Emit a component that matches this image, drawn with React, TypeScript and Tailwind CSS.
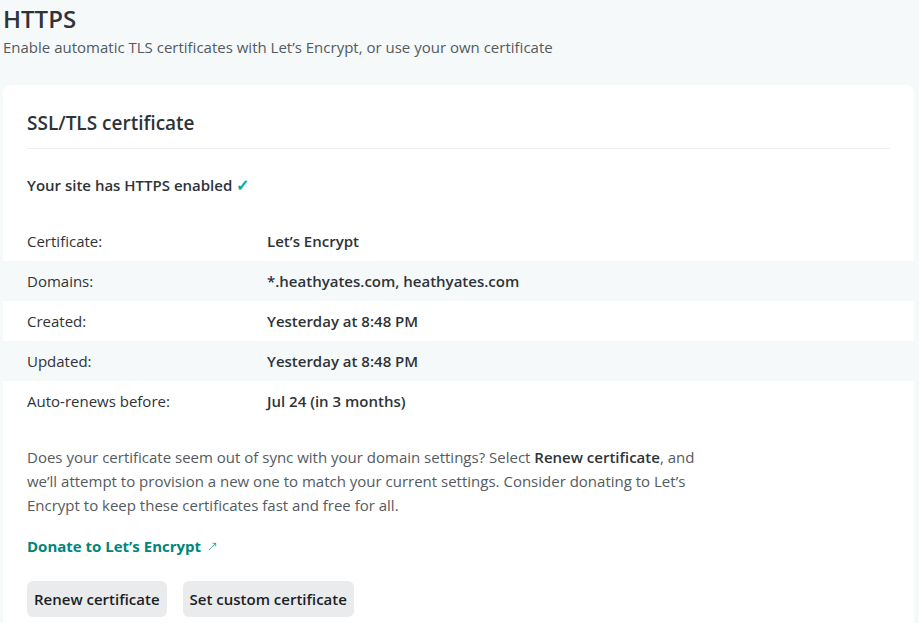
import { MoveUpRight } from "lucide-react";

const rows = [
  { label: "Certificate:", value: "Let’s Encrypt", shaded: false },
  { label: "Domains:", value: "*.heathyates.com, heathyates.com", shaded: true },
  { label: "Created:", value: "Yesterday at 8:48 PM", shaded: false },
  { label: "Updated:", value: "Yesterday at 8:48 PM", shaded: true },
  { label: "Auto-renews before:", value: "Jul 24 (in 3 months)", shaded: false },
];

export default function App() {
  return (
    <div
      className="min-h-[623px] w-[919px] overflow-hidden bg-[#f6f9fa] text-[#2e3338]"
      style={{ fontFamily: '"Open Sans", "Noto Sans", sans-serif' }}
    >
      <div className="pl-[3px] pr-[5px] pt-[3px]">
        <h1 className="text-[24px] font-semibold leading-[31px] text-[#2e3338]">HTTPS</h1>
        <p className="mt-[1px] text-[15px] leading-[24px] text-[#545a61]">
          Enable automatic TLS certificates with Let’s Encrypt, or use your own certificate
        </p>

        <div className="mt-[26px] rounded-lg bg-white pb-6 pt-[24px]">
          <div className="mx-6">
            <h2 className="border-b border-[#ebeef0] pb-[11px] text-[19px] font-semibold leading-[28px] text-[#2e3338]">
              SSL/TLS certificate
            </h2>
            <p className="mt-[24px] text-[15px] font-semibold leading-[24px]">
              Your site has HTTPS enabled <span className="text-[16px] text-[#00ad9f]">✓</span>
            </p>
          </div>

          <div className="mt-[24px]">
            {rows.map((r) => (
              <div
                key={r.label}
                className={`flex h-10 items-center px-6 text-[15px] ${r.shaded ? "bg-[#f6f9fa]" : ""}`}
              >
                <div className="w-[240px] text-[#2e3338]">{r.label}</div>
                <div className="font-semibold">{r.value}</div>
              </div>
            ))}
          </div>

          <div className="mx-6 mt-[24px]">
            <p className="max-w-[690px] text-[15px] leading-[24px] text-[#545a61]">
              Does your certificate seem out of sync with your domain settings? Select{" "}
              <span className="font-semibold text-[#2e3338]">Renew certificate</span>, and we’ll attempt to
              provision a new one to match your current settings. Consider donating to Let’s Encrypt to keep
              these certificates fast and free for all.
            </p>
            <a className="mt-[17px] flex items-center gap-[6px] text-[15px] font-bold leading-[24px] text-[#00857a]">
              Donate to Let’s Encrypt
              <MoveUpRight size={11} strokeWidth={1.5} className="text-[#00857a]" />
            </a>
            <div className="mt-[23px] flex gap-4">
              <button className="h-9 rounded-md bg-[#e9ebed] px-[7px] text-[15px] font-semibold text-[#1b1f23]">
                Renew certificate
              </button>
              <button className="h-9 rounded-md bg-[#e9ebed] px-[7px] text-[15px] font-semibold text-[#1b1f23]">
                Set custom certificate
              </button>
            </div>
          </div>
        </div>
      </div>
    </div>
  );
}
